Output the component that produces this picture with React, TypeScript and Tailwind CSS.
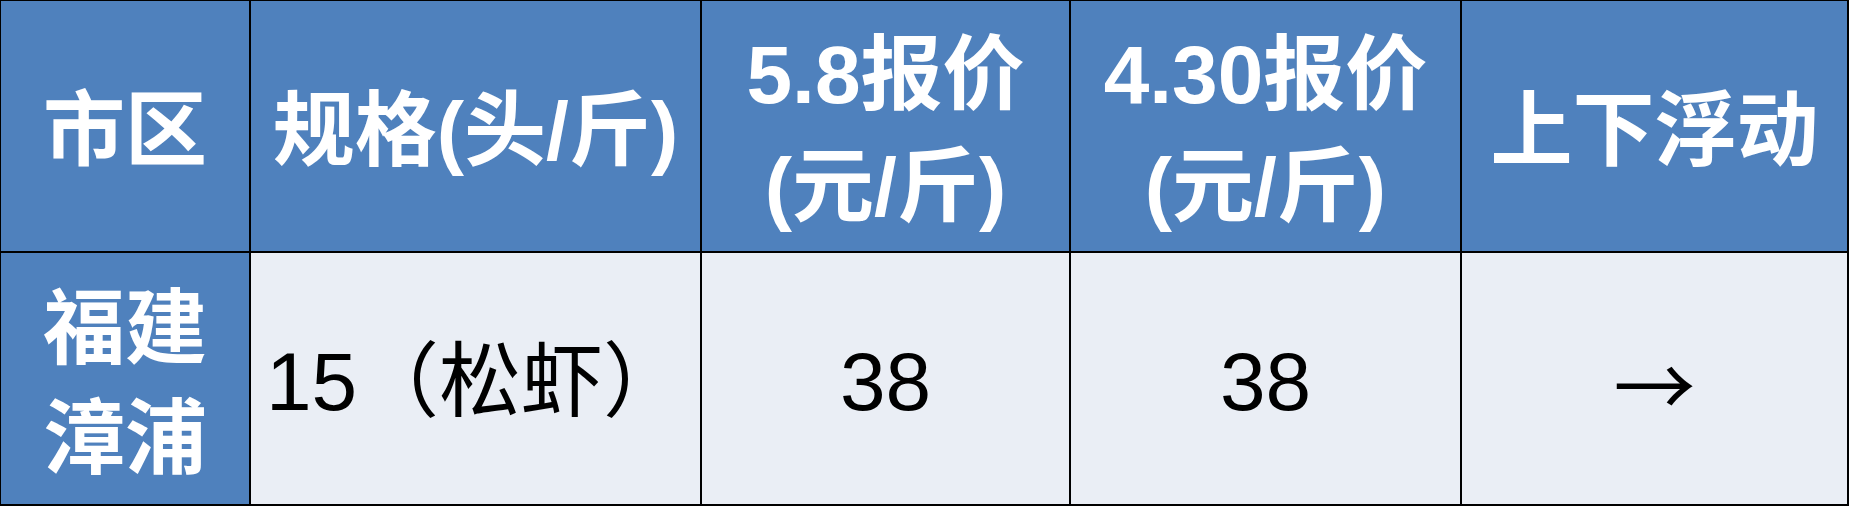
const head = "bg-[#4F81BD] text-white font-bold flex items-center justify-center text-center text-[82px] leading-[112px] pt-[10px]";
const body = "bg-[#EAEEF5] text-black flex items-center justify-center text-center text-[82px] leading-[110px] pt-[6px]";

export default function App() {
  return (
    <div className="bg-white w-[1851px] h-[507px] font-['Liberation_Sans','Noto_Sans_CJK_SC',sans-serif]">
      <div className="w-[1849px] grid grid-cols-[248px_449px_367px_389px_385px] grid-rows-[250px_251px] gap-[2px] bg-black pt-[1px] pl-[1px] pr-[2px] pb-[2px]">
        <div className={head}>市区</div>
        <div className={head}>规格(头/斤)</div>
        <div className={head}>
          <div>
            <div>5.8报价</div>
            <div>(元/斤)</div>
          </div>
        </div>
        <div className={head}>
          <div>
            <div>4.30报价</div>
            <div>(元/斤)</div>
          </div>
        </div>
        <div className={head}>上下浮动</div>

        <div className="bg-[#4F81BD] text-white font-bold flex items-center justify-center text-center text-[82px] leading-[110px] pt-[10px]">
          <div>
            <div>福建</div>
            <div>漳浦</div>
          </div>
        </div>
        <div className={body}>15（松虾）</div>
        <div className={body}>38</div>
        <div className={body}>38</div>
        <div className={body}>
          <span className="font-['Noto_Sans_CJK_SC',sans-serif]">→</span>
        </div>
      </div>
    </div>
  );
}
